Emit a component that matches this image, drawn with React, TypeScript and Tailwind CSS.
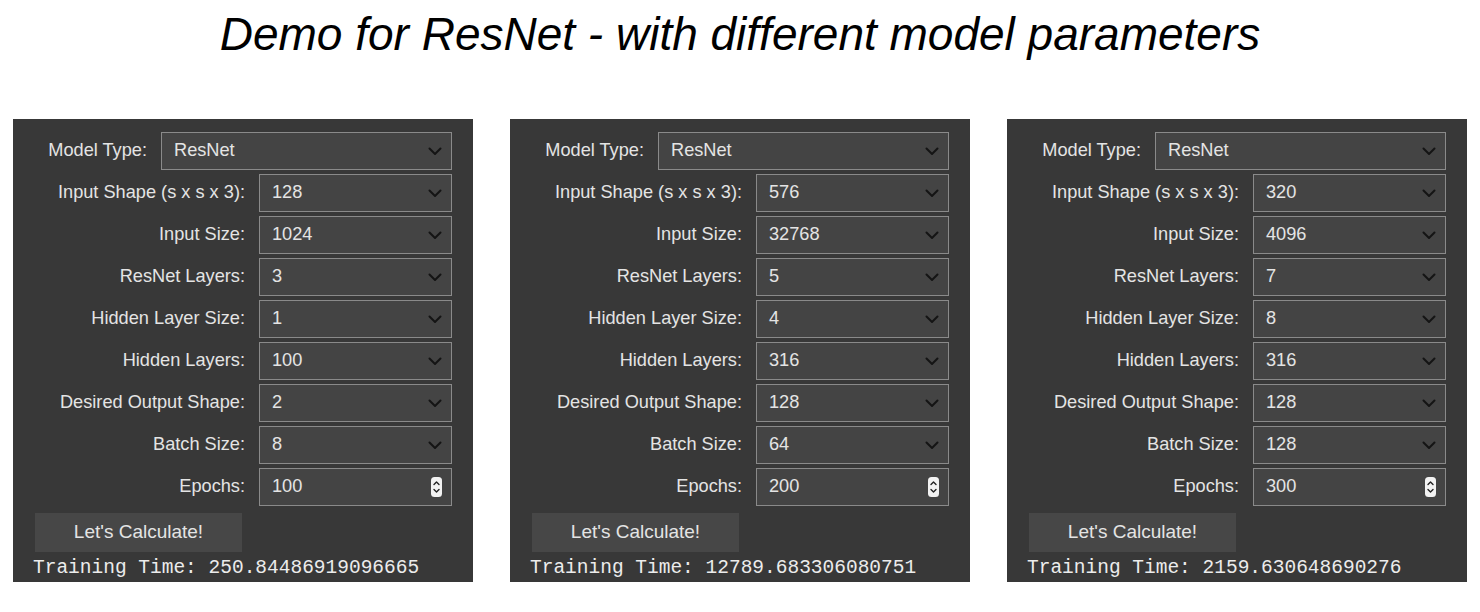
import React from 'react'

type Panel = {
  inputShape: string
  inputSize: string
  layers: string
  hiddenSize: string
  hiddenLayers: string
  outputShape: string
  batch: string
  epochs: string
  time: string
}

const panels: Panel[] = [
  { inputShape: '128', inputSize: '1024', layers: '3', hiddenSize: '1', hiddenLayers: '100', outputShape: '2', batch: '8', epochs: '100', time: '250.84486919096665' },
  { inputShape: '576', inputSize: '32768', layers: '5', hiddenSize: '4', hiddenLayers: '316', outputShape: '128', batch: '64', epochs: '200', time: '12789.683306080751' },
  { inputShape: '320', inputSize: '4096', layers: '7', hiddenSize: '8', hiddenLayers: '316', outputShape: '128', batch: '128', epochs: '300', time: '2159.630648690276' },
]

const Chevron = () => (
  <svg width="14" height="9" viewBox="0 0 14 9" className="shrink-0">
    <path d="M1.5 1.5 L7 7 L12.5 1.5" fill="none" stroke="#141414" strokeWidth="2" strokeLinecap="round" strokeLinejoin="round" />
  </svg>
)

const Spinner = () => (
  <svg width="11" height="20" viewBox="0 0 11 20" className="shrink-0">
    <rect x="0" y="0" width="11" height="20" rx="3.5" fill="#f2f2f2" />
    <path d="M3 7.5 L5.5 5 L8 7.5" fill="none" stroke="#222" strokeWidth="1.4" strokeLinecap="round" strokeLinejoin="round" />
    <path d="M3 12.5 L5.5 15 L8 12.5" fill="none" stroke="#222" strokeWidth="1.4" strokeLinecap="round" strokeLinejoin="round" />
  </svg>
)

function Field({ label, value, wide, number }: { label: string; value: string; wide?: boolean; number?: boolean }) {
  return (
    <div className="flex items-center justify-end gap-[14px] h-[38px]">
      <span className="text-[18.2px] text-[#e4e4e4] whitespace-nowrap">{label}</span>
      <div
        className={`${wide ? 'w-[291px]' : 'w-[193px]'} h-[38px] flex items-center justify-between pl-[12px] pr-[9px] bg-[#444444] border border-[#8a8a8a] text-[18.2px] text-[#e4e4e4]`}
      >
        <span>{value}</span>
        {number ? <Spinner /> : <Chevron />}
      </div>
    </div>
  )
}

function Card({ p }: { p: Panel }) {
  return (
    <div className="w-[460px] h-[463px] bg-[#383838] pt-[13px] flex flex-col">
      <div className="flex flex-col gap-[4px] pr-[21px]">
        <Field label="Model Type:" value="ResNet" wide />
        <Field label="Input Shape (s x s x 3):" value={p.inputShape} />
        <Field label="Input Size:" value={p.inputSize} />
        <Field label="ResNet Layers:" value={p.layers} />
        <Field label="Hidden Layer Size:" value={p.hiddenSize} />
        <Field label="Hidden Layers:" value={p.hiddenLayers} />
        <Field label="Desired Output Shape:" value={p.outputShape} />
        <Field label="Batch Size:" value={p.batch} />
        <Field label="Epochs:" value={p.epochs} number />
      </div>
      <div className="pl-[22px] mt-[7px]">
        <div className="w-[207px] h-[39px] bg-[#474747] flex items-center justify-center text-[19px] text-[#e4e4e4]">
          Let's Calculate!
        </div>
      </div>
      <div
        className="pl-[20px] mt-[3px] text-[19.5px] leading-[26px] text-[#ececec] whitespace-nowrap"
        style={{ fontFamily: '"Liberation Mono", monospace' }}
      >
        Training Time: {p.time}
      </div>
    </div>
  )
}

export default function App() {
  return (
    <div className="w-[1480px] h-[612px] bg-white" style={{ fontFamily: '"Liberation Sans", Arial, sans-serif' }}>
      <h1 className="h-[119px] pt-[8px] text-center italic text-[46px] leading-[52px] text-black">
        Demo for ResNet - with different model parameters
      </h1>
      <div className="flex justify-center gap-[37px]">
        {panels.map((p, i) => (
          <Card key={i} p={p} />
        ))}
      </div>
    </div>
  )
}
